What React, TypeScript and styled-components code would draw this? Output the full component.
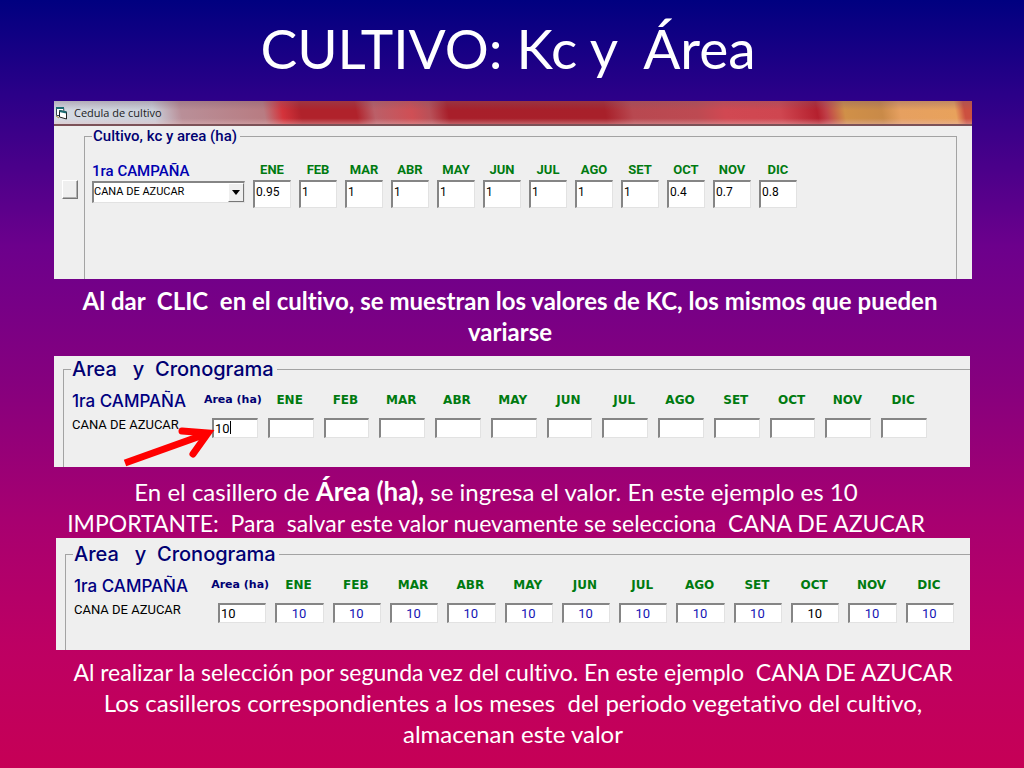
import React from "react";
import styled, { createGlobalStyle } from "styled-components";

const GlobalStyle = createGlobalStyle`
  * { box-sizing: border-box; }
  body { margin: 0; }
`;

const Slide = styled.main`
  min-height: 100vh;
  padding: 0 54px 12px;
  color: #fff;
  font-family: Lato, "Open Sans", sans-serif;
  font-variant-ligatures: none;
  background: linear-gradient(#000080 0%, #2a0088 12%, #6c008c 32%, #86007e 50%, #a80070 68%, #bd0063 84%, #c60056 100%);
`;

const Title = styled.h1`
  margin: 0;
  height: 101px;
  padding: 12px 8px 0 0;
  font-size: 55px;
  font-weight: 400;
  line-height: 72px;
  text-align: center;
  white-space: pre-wrap;
`;

const Caption = styled.p<{ $bold?: boolean; $top: number; $bottom: number; $shift?: number }>`
  margin: 0 -54px;
  padding: ${(p) => p.$top}px ${(p) => (p.$shift && p.$shift < 0 ? -p.$shift : 0)}px ${(p) => p.$bottom}px
    ${(p) => (p.$shift && p.$shift > 0 ? p.$shift : 0)}px;
  font-size: 24px;
  font-weight: ${(p) => (p.$bold ? 700 : 400)};
  line-height: 31px;
  text-align: center;
  white-space: pre-wrap;

  strong { font-size: 26px; line-height: 1; }
`;

const Note = styled.span`
  font-size: 23px;
  line-height: 1;
`;

const Window = styled.section<{ $height: number; $indent?: number; $outdent?: number; $top?: number }>`
  position: relative;
  min-height: ${(p) => p.$height}px;
  margin-left: ${(p) => p.$indent ?? 0}px;
  margin-right: ${(p) => -(p.$outdent ?? 0)}px;
  padding-top: ${(p) => p.$top ?? 0}px;
  display: flex;
  flex-direction: column;
  color: #000;
  background: #efefef;
  font-family: Roboto, "Liberation Sans", sans-serif;
`;

const TitleBar = styled.header`
  display: flex;
  align-items: center;
  gap: 6px;
  height: 25px;
  padding-left: 1px;
  font: 11px "Open Sans", sans-serif;
  color: #222;
  border-bottom: 2px solid #7c5258;
  background:
    linear-gradient(rgba(120, 90, 110, 0.35), transparent 40%, transparent 75%, rgba(230, 190, 190, 0.4)),
    linear-gradient(80deg, #d5dbe4 0%, #cbd0da 11%, #b98f98 14%, #b87c82 23%, #d4333b 25%, #b0222b 27%, #b0222b 33%,
      #bb5f68 35%, #cf4f55 39%, #b85058 41%, #a81f2a 43%, #a8202a 60%, #b84850 63%, #bd4a52 70%, #d14852 73%,
      #cf4650 79%, #b5202e 83%, #c04048 84%, #d09048 86%, #c98a48 90%, #e6a060 92%, #e8a25c 98%, #cc5040 99%);
`;

const WindowBody = styled.div`
  flex: 1;
  display: flex;
  padding-right: 15px;
`;

const SideBar = styled.div`
  width: 30px;
  padding: 54px 0 0 8px;
`;

const SquareButton = styled.button`
  display: block;
  width: 16px;
  height: 19px;
  padding: 0;
  background: #efefef;
  border: 1px solid;
  border-color: #fff #777 #777 #fff;
  box-shadow: inset -1px -1px #b0b0b0;
`;

const Group = styled.fieldset<{ $open?: boolean }>`
  flex: 1;
  min-width: 0;
  margin: 0 0 0 ${(p) => (p.$open ? 9 : 0)}px;
  padding: 0 0 0 7px;
  border: 1px solid #a3a3a3;
  border-bottom: 0;
  ${(p) => p.$open && "border-right: 0;"}
`;

const Legend = styled.legend<{ $large?: boolean }>`
  padding: 0 3px 0 1px;
  color: #000072;
  font: ${(p) => (p.$large ? "500 20px Inter" : "500 15px Roboto")}, sans-serif;
  line-height: 20px;
  white-space: pre;
`;

const Row = styled.div<{ $head: number; $end: number; $top: number }>`
  display: grid;
  grid-template-columns: ${(p) => p.$head}px 1fr;
  padding: ${(p) => p.$top}px ${(p) => p.$end}px 0 0;
`;

const Head = styled.div<{ $gap: number; $inset?: number }>`
  display: flex;
  flex-direction: column;
  align-items: flex-start;
  gap: ${(p) => p.$gap}px;
  padding-left: ${(p) => p.$inset ?? 0}px;
  font-size: 13px;
  line-height: 16px;
  white-space: nowrap;
`;

const Campaign = styled.label<{ $wide?: boolean }>`
  color: ${(p) => (p.$wide ? "#000080" : "#0000b0")};
  font: ${(p) => (p.$wide ? "500 17px Inter" : "500 15px Roboto")}, sans-serif;
  line-height: 18px;
  margin-bottom: -2px;
`;

const Months = styled.div<{ $count: number; $gap: number }>`
  display: grid;
  grid-template-columns: repeat(${(p) => p.$count}, minmax(0, 1fr));
  column-gap: ${(p) => p.$gap}px;
`;

const Field = styled.div<{ $gap: number; $wide?: boolean }>`
  position: relative;
  display: flex;
  flex-direction: column;
  align-items: center;
  gap: ${(p) => p.$gap}px;

  label {
    color: #007a10;
    font-size: 13px;
    font-weight: 700;
    line-height: 16px;
    white-space: nowrap;
    ${(p) => p.$wide && 'font-family: "DejaVu Sans", sans-serif; font-size: 12px; padding-right: 2px;'}
  }
`;

const AreaField = styled(Field)`
  label { color: #000072; font-size: 11px; padding-right: 4px; }
`;

const Caret = styled.span`
  position: absolute;
  left: 18px;
  bottom: 4px;
  width: 1px;
  height: 13px;
  background: #000;
`;

const Cell = styled.input<{ $tall?: boolean; $center?: boolean; $color?: string }>`
  width: 100%;
  height: ${(p) => (p.$tall ? 28 : 20)}px;
  padding: ${(p) => (p.$tall ? "0 0 6px 1px" : p.$center ? "0 2px 0 0" : "0 0 0 1px")};
  text-align: ${(p) => (p.$center ? "center" : "left")};
  color: ${(p) => p.$color ?? "#000"};
  background: #fff;
  font: ${(p) => (p.$tall ? "12px Roboto" : "13px Roboto")}, sans-serif;
  border: solid;
  border-width: 2px 1px 1px 2px;
  border-color: #858585 #e2e2e2 #e2e2e2 #858585;
  border-radius: 0;
  outline: 0;
`;

const SelectBox = styled.div`
  position: relative;
  width: 153px;
`;

const Select = styled.select`
  appearance: none;
  display: block;
  width: 100%;
  height: 22px;
  padding: 0 18px 2px 0;
  font: 11px Roboto, sans-serif;
  color: #000;
  background: #fff;
  border: solid;
  border-width: 2px 1px 1px 2px;
  border-color: #858585 #e2e2e2 #e2e2e2 #858585;
  border-radius: 0;
`;

const DropMark = styled.span`
  position: absolute;
  top: 2px;
  right: 1px;
  bottom: 1px;
  width: 16px;
  display: grid;
  place-items: center;
  pointer-events: none;
  background: #efefef;
  border: 1px solid;
  border-color: #fff #777 #777 #fff;
`;

const Pointer = styled.svg`
  position: absolute;
  left: 68px;
  top: 68px;
  pointer-events: none;
`;

const MONTHS = ["ENE", "FEB", "MAR", "ABR", "MAY", "JUN", "JUL", "AGO", "SET", "OCT", "NOV", "DIC"];
const KC = ["0.95", "1", "1", "1", "1", "1", "1", "1", "1", "0.4", "0.7", "0.8"];

function FormIcon() {
  return (
    <svg width="13" height="14" viewBox="0 0 13 14" aria-hidden="true">
      <path d="M1.500 1.500h7l1 8h-8z" fill="#fff" stroke="#345" />
      <path d="M1 1h8v2H1z" fill="#1b6a72" />
      <path d="M4.500 4.500l7 1.500v7l-7-2z" fill="#fff" stroke="#222" />
      <path d="M4.500 5l7 1.500" stroke="#1b6a72" strokeWidth="2" />
      <path d="M1 10l3 2" stroke="#b09030" />
    </svg>
  );
}

interface ScheduleProps {
  id: string;
  gap: number;
  end: number;
  head: number;
  area: string;
  values: string[];
  editing?: boolean;
}

function Schedule({ id, gap, end, head, area, values, editing }: ScheduleProps) {
  return (
    <Group $open>
      <Legend $large>{"Area   y  Cronograma"}</Legend>
      <Row $head={head} $end={end} $top={13}>
        <Head $gap={9} $inset={1}>
          <Campaign as="span" $wide>1ra CAMPAÑA</Campaign>
          <span>CANA DE AZUCAR</span>
        </Head>
        <Months $count={13} $gap={gap}>
          <AreaField $gap={10} $wide>
            <label htmlFor={`${id}-area`}>Area (ha)</label>
            <Cell id={`${id}-area`} defaultValue={area} />
            {editing && <Caret />}
          </AreaField>
          {MONTHS.map((m, i) => (
            <Field key={m} $gap={10} $wide>
              <label htmlFor={`${id}-${m}`}>{m}</label>
              <Cell id={`${id}-${m}`} defaultValue={values[i]} $center $color={m === "OCT" ? "#000" : "#1414b4"} />
            </Field>
          ))}
        </Months>
      </Row>
    </Group>
  );
}

export default function App() {
  return (
    <>
      <GlobalStyle />
      <Slide>
        <Title>{"CULTIVO: Kc y  Área"}</Title>

        <Window $height={178} $outdent={2}>
          <TitleBar>
            <FormIcon />
            <span>Cedula de cultivo</span>
          </TitleBar>
          <WindowBody>
            <SideBar>
              <SquareButton type="button" aria-label="Seleccionar" />
            </SideBar>
            <Group>
              <Legend>Cultivo, kc y area (ha)</Legend>
              <Row $head={161} $end={159} $top={16}>
                <Head $gap={3}>
                  <Campaign htmlFor="crop">1ra CAMPAÑA</Campaign>
                  <SelectBox>
                    <Select id="crop">
                      <option>CANA DE AZUCAR</option>
                    </Select>
                    <DropMark>
                      <svg width="8" height="5" viewBox="0 0 8 5" aria-hidden="true">
                        <path d="M0 0h8L4 5z" fill="#000" />
                      </svg>
                    </DropMark>
                  </SelectBox>
                </Head>
                <Months $count={12} $gap={8}>
                  {MONTHS.map((m, i) => (
                    <Field key={m} $gap={2}>
                      <label htmlFor={`kc-${m}`}>{m}</label>
                      <Cell id={`kc-${m}`} $tall defaultValue={KC[i]} />
                    </Field>
                  ))}
                </Months>
              </Row>
            </Group>
          </WindowBody>
        </Window>

        <Caption $bold $top={6} $bottom={9} $shift={-4}>
          {"Al dar  CLIC  en el cultivo, se muestran los valores de KC, los mismos que pueden"}
          <br />
          variarse
        </Caption>

        <Window $height={111} $top={3}>
          <Schedule id="first" gap={10} end={43} head={141} area="10" values={MONTHS.map(() => "")} editing />
          <Pointer width="94" height="46" viewBox="0 0 94 46" aria-hidden="true">
            <path d="M3 39L84 10" fill="none" stroke="#f00" strokeWidth="7" />
            <path d="M60 7L86 9L71 30" fill="none" stroke="#f00" strokeWidth="7" strokeLinecap="round" />
          </Pointer>
        </Window>

        <Caption $top={9} $bottom={0} $shift={-32}>
          En el casillero de <strong>Área (ha),</strong> se ingresa el valor. En este ejemplo es 10
          <br />
          <Note>{"IMPORTANTE:  Para  salvar este valor nuevamente se selecciona  CANA DE AZUCAR"}</Note>
        </Caption>

        <Window $height={112} $top={6} $indent={2}>
          <Schedule id="second" gap={9} end={16} head={145} area="10" values={MONTHS.map(() => "10")} />
        </Window>

        <Caption $top={6} $bottom={0} $shift={2}>
          <Note>{"Al realizar la selección por segunda vez del cultivo. En este ejemplo  CANA DE AZUCAR"}</Note>
          <br />
          {"Los casilleros correspondientes a los meses  del periodo vegetativo del cultivo,"}
          <br />
          almacenan este valor
        </Caption>
      </Slide>
    </>
  );
}
